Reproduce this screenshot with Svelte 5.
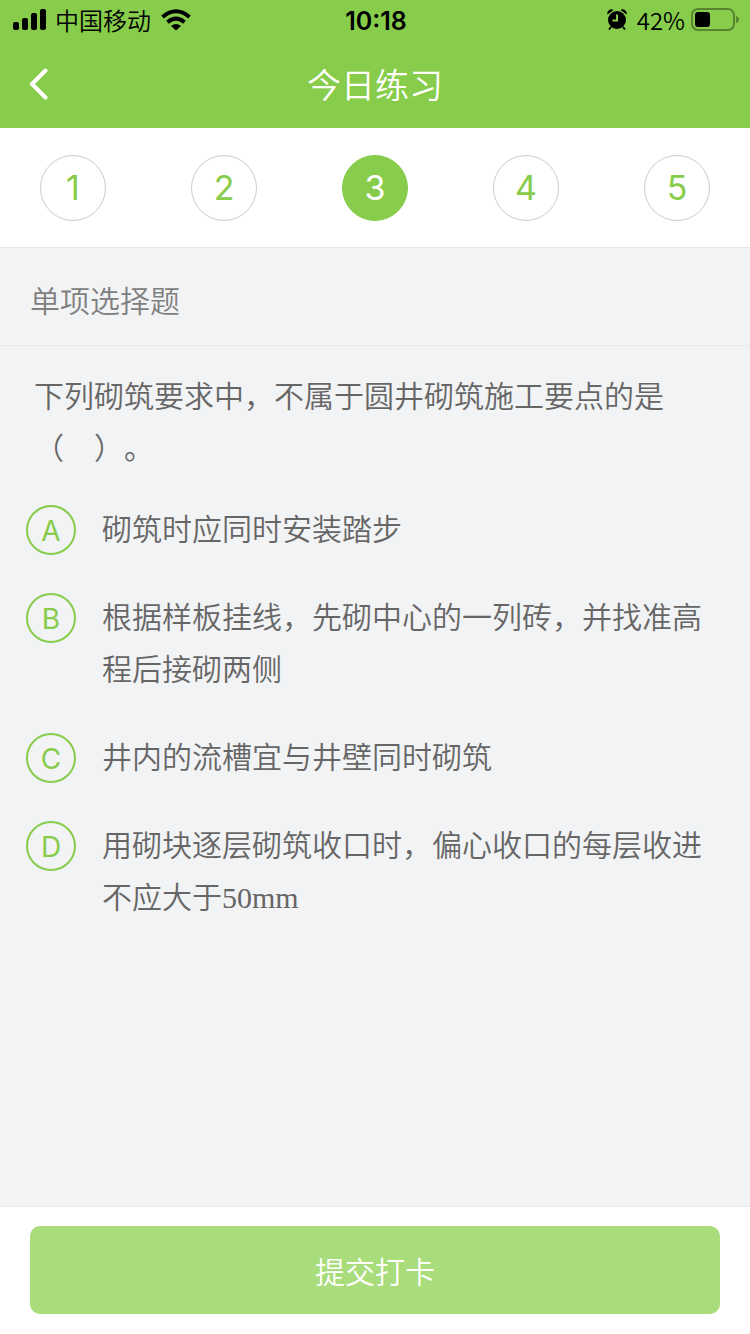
<script lang="ts">
  type Option = { key: string; text: string };

  const steps = [1, 2, 3, 4, 5];
  const options: Option[] = [
    { key: "A", text: "砌筑时应同时安装踏步" },
    { key: "B", text: "根据样板挂线，先砌中心的一列砖，并找准高程后接砌两侧" },
    { key: "C", text: "井内的流槽宜与井壁同时砌筑" },
    { key: "D", text: "用砌块逐层砌筑收口时，偏心收口的每层收进不应大于50mm" },
  ];

  let current = $state(3);
  let answer = $state("");
</script>

<div class="page">
  <header class="header">
    <div class="status">
      <div class="status-left">
        <svg width="34" height="22" viewBox="0 0 34 22" aria-hidden="true">
          <rect x="0" y="13" width="6" height="8" rx="2" />
          <rect x="9" y="9" width="6" height="12" rx="2" />
          <rect x="18" y="4" width="6" height="17" rx="2" />
          <rect x="27" y="0" width="6" height="21" rx="2" />
        </svg>
        <span class="carrier">中国移动</span>
        <svg class="wifi" width="30" height="22" viewBox="0 0 30 22" aria-hidden="true">
          <path d="M1.5 8Q15 -3.5 28.5 8" />
          <path d="M6.5 13.2Q15 6 23.5 13.2" />
          <path class="solid" d="M15 21.5L10 17Q15 13 20 17Z" />
        </svg>
      </div>
      <span class="time">10:18</span>
      <div class="status-right">
        <svg width="20" height="22" viewBox="0 0 20 22" aria-hidden="true">
          <circle cx="10" cy="11" r="9" />
          <path d="M0.5 5.5A4 4 0 0 1 6.5 1ZM19.5 5.5A4 4 0 0 0 13.5 1Z" />
          <path class="leg" d="M4 18L2 20.5M16 18L18 20.5" />
          <path class="hand" d="M10 5.5V11.5H5.5" />
        </svg>
        <span class="percent">42%</span>
        <svg width="48" height="24" viewBox="0 0 48 24" aria-hidden="true">
          <rect class="shell" x="1" y="1" width="42" height="21" rx="6" />
          <path class="cap" d="M45 8Q48 9 48 11.5Q48 14 45 15Z" />
          <rect x="4" y="4" width="15" height="15" rx="3" />
        </svg>
      </div>
    </div>
    <div class="nav">
      <button class="back" type="button" aria-label="返回">
        <svg width="20" height="32" viewBox="0 0 20 32" aria-hidden="true">
          <path d="M16.5 2.5L3 16L16.5 29.5" />
        </svg>
      </button>
      <h1>今日练习</h1>
    </div>
  </header>

  <nav class="steps">
    {#each steps as step}
      <button
        type="button"
        class="step"
        class:active={step === current}
        onclick={() => (current = step)}>{step}</button
      >
    {/each}
  </nav>

  <main class="content">
    <h2>单项选择题</h2>
    <p class="question" id="question">下列砌筑要求中，不属于圆井砌筑施工要点的是（　）。</p>
    <div class="options" role="radiogroup" aria-labelledby="question">
      {#each options as option}
        <label class="option">
          <input type="radio" name="answer" value={option.key} bind:group={answer} />
          <span class="badge">{option.key}</span>
          <span class="text">{option.text}</span>
        </label>
      {/each}
    </div>
  </main>

  <footer class="footer">
    <button class="submit" class:ready={answer !== ""} type="button">提交打卡</button>
  </footer>
</div>

<style>
  :global(body) {
    margin: 0;
  }

  .page {
    display: flex;
    flex-direction: column;
    min-height: 100vh;
    background: #f2f3f5;
    color: #666;
    font-family: Inter, "Noto Sans CJK SC", sans-serif;
    font-weight: 350;
    text-spacing-trim: space-all;
  }

  button {
    border: 0;
    padding: 0;
    font: inherit;
    cursor: pointer;
  }

  svg {
    display: block;
  }

  /* Header */
  .header {
    background: #87cc4b;
  }

  .status {
    display: grid;
    grid-template-columns: 1fr auto 1fr;
    align-items: center;
    height: 40px;
    padding: 0 11px 0 13px;
    color: #000;
    font-size: 24px;
    line-height: 40px;
  }

  .status-left,
  .status-right {
    display: flex;
    align-items: center;
  }

  .status-left {
    gap: 8px;
  }

  .status-right {
    justify-content: flex-end;
    gap: 6px;
  }

  .carrier {
    margin-right: 2px;
    padding-top: 4px;
    line-height: 36px;
  }

  .percent {
    padding-left: 4px;
    font-family: "Noto Sans CJK SC", sans-serif;
    line-height: 38px;
  }

  .time {
    padding-top: 2px;
    font-size: 25px;
    font-weight: 600;
    line-height: 38px;
  }

  .wifi path {
    fill: none;
    stroke: #000;
    stroke-width: 4;
  }

  .wifi .solid {
    fill: #000;
    stroke: none;
  }

  .leg {
    stroke: #000;
    stroke-width: 2;
  }

  .hand {
    fill: none;
    stroke: #87cc4b;
    stroke-width: 2;
  }

  .shell {
    fill: none;
    stroke: #578530;
    stroke-width: 2;
  }

  .cap {
    fill: #578530;
  }

  .nav {
    display: grid;
    grid-template-columns: 60px 1fr 60px;
    align-items: center;
    height: 88px;
  }

  .back {
    display: flex;
    align-items: center;
    height: 88px;
    padding-left: 29px;
    background: none;
  }

  .back path {
    fill: none;
    stroke: #fff;
    stroke-width: 4;
    stroke-linecap: round;
    stroke-linejoin: round;
  }

  h1 {
    margin: 0;
    padding-top: 4px;
    color: #fff;
    font-size: 34px;
    font-weight: 350;
    line-height: 84px;
    text-align: center;
  }

  /* Question numbers */
  .steps {
    display: flex;
    justify-content: space-between;
    padding: 27px 40px 26px;
    border-bottom: 1px solid #e8e8e8;
    background: #fff;
  }

  .step {
    box-sizing: border-box;
    width: 66px;
    height: 66px;
    border: 1px solid #ccc;
    border-radius: 50%;
    background: #fff;
    color: #87cc4b;
    font-size: 34px;
    font-weight: 400;
    line-height: 64px;
  }

  .step.active {
    border-color: #87cc4b;
    background: #87cc4b;
    color: #fff;
  }

  /* Question */
  .content {
    flex: 1;
  }

  h2 {
    margin: 0;
    padding: 10px 30px 0;
    border-bottom: 1px solid #e8e9eb;
    color: #808080;
    font-size: 30px;
    font-weight: 350;
    line-height: 87px;
  }

  .question {
    margin: 0;
    padding: 24px 34px 30px;
    font-size: 30px;
    line-height: 52px;
  }

  .options {
    display: flex;
    flex-direction: column;
    gap: 36px;
    padding: 0 26px 36px;
  }

  .option {
    position: relative;
    display: flex;
    align-items: flex-start;
    gap: 26px;
    font-size: 30px;
    line-height: 52px;
    cursor: pointer;
  }

  .option input {
    position: absolute;
    opacity: 0;
  }

  .badge {
    flex: none;
    box-sizing: border-box;
    width: 50px;
    height: 50px;
    margin-top: 1px;
    border: 2px solid #87cc4b;
    border-radius: 50%;
    color: #87cc4b;
    font-size: 28px;
    font-weight: 400;
    line-height: 48px;
    text-align: center;
  }

  .option input:checked + .badge {
    background: #87cc4b;
    color: #fff;
  }

  .text {
    font-family: "Liberation Serif", "Noto Sans CJK SC", serif;
  }

  /* Submit bar */
  .footer {
    padding: 19px 30px 20px;
    border-top: 1px solid #e8e8e8;
    background: #fff;
  }

  .submit {
    width: 100%;
    height: 88px;
    border-radius: 10px;
    background: #a9dc7a;
    color: #fff;
    font-size: 30px;
  }

  .submit.ready {
    background: #87cc4b;
  }
</style>
